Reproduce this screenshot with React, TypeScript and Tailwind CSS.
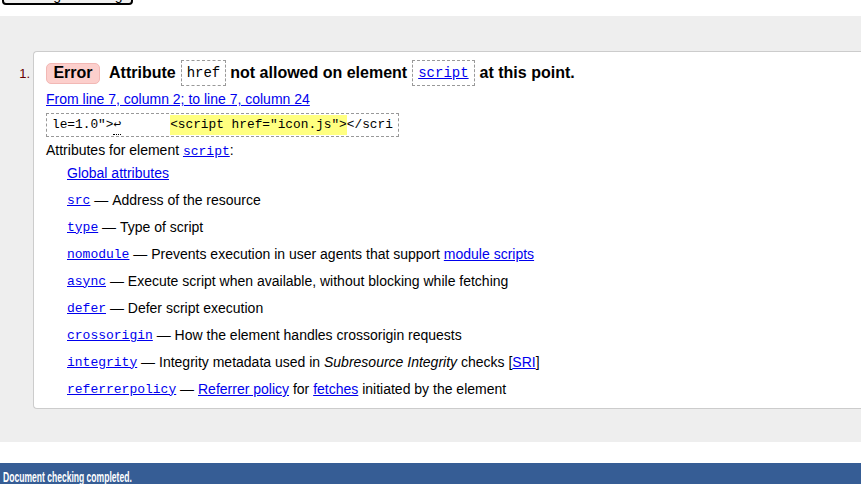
const attrs: { name: string; desc: React.ReactNode }[] = [
  { name: "src", desc: "Address of the resource" },
  { name: "type", desc: "Type of script" },
  {
    name: "nomodule",
    desc: (
      <>
        Prevents execution in user agents that support{" "}
        <a href="#" className="text-[#00e] underline">module scripts</a>
      </>
    ),
  },
  { name: "async", desc: "Execute script when available, without blocking while fetching" },
  { name: "defer", desc: "Defer script execution" },
  { name: "crossorigin", desc: "How the element handles crossorigin requests" },
  {
    name: "integrity",
    desc: (
      <>
        Integrity metadata used in <i>Subresource Integrity</i> checks [
        <a href="#" className="text-[#00e] underline">SRI</a>]
      </>
    ),
  },
  {
    name: "referrerpolicy",
    desc: (
      <>
        <a href="#" className="text-[#00e] underline">Referrer policy</a> for{" "}
        <a href="#" className="text-[#00e] underline">fetches</a> initiated by the element
      </>
    ),
  },
];

const mono = "font-['Liberation_Mono','DejaVu_Sans_Mono',monospace]";

export default function App() {
  return (
    <div className="h-[484px] overflow-hidden bg-white font-['Liberation_Sans',Arial,sans-serif] text-[14px] text-black">
      <div className="h-[16px] overflow-hidden">
        <button className="mt-[-14px] ml-[2px] block h-[19px] rounded-[4px] border-2 border-black bg-[#f0f0f0] px-[8px] text-[14px] leading-[15px] text-black">
          Message Filtering
        </button>
      </div>

      <div className="flex h-[426px] overflow-hidden bg-[#eeeeee] pt-[35px]">
        <div className="w-[33px] shrink-0 pr-[3px] pt-[14px] text-right text-[13px] leading-[18px] text-[#600]">
          1.
        </div>
        <div className="h-[358px] w-[900px] shrink-0 rounded-l-[4px] border border-r-0 border-[#cccccc] bg-white pl-[12px] pt-[8px]">
          <div className="flex h-[26px] items-center text-[16px] font-bold">
            <span className="flex h-[21px] w-[54px] items-center justify-center rounded-[5px] border border-[#f2b8b5] bg-[#fccfcc]">
              Error
            </span>
            <span className="ml-[9px]">Attribute</span>
            <code className={`${mono} ml-[5px] flex h-[26px] items-center border border-dashed border-[#999] px-[5px] text-[14px] font-normal`}>
              href
            </code>
            <span className="ml-[4px]">not allowed on element</span>
            <code className={`${mono} ml-[5px] flex h-[26px] items-center border border-dashed border-[#999] px-[5px] text-[14px] font-normal`}>
              <a href="#" className="text-[#00e] underline">script</a>
            </code>
            <span className="ml-[5px]">at this point.</span>
          </div>

          <div className="mt-[4px] leading-[18px]">
            <a href="#" className="text-[#00e] underline">
              From line 7, column 2; to line 7, column 24
            </a>
          </div>

          <div className={`${mono} mt-[5px] flex h-[24px] w-[353px] items-center overflow-hidden whitespace-pre border border-dashed border-[#999] pl-[5px] text-[12.8px]`}>
            <span>le=1.0"&gt;</span>
            <span className="border-b border-dotted border-black">↩</span>
            <span className="inline-block w-[49px] shrink-0" />
            <span className="bg-[#ffff80]">&lt;script href="icon.js"&gt;</span>
            <span>&lt;/scri</span>
          </div>

          <div className="mt-[5px] leading-[16px]">
            Attributes for element{" "}
            <a href="#" className={`${mono} text-[13px] text-[#00e] underline`}>script</a>:
          </div>

          <div className="pl-[21px]">
            <div className="flex h-[27px] items-center">
              <a href="#" className="text-[#00e] underline">Global attributes</a>
            </div>
            {attrs.map((a) => (
              <div key={a.name} className="flex h-[27px] items-center whitespace-pre">
                <a href="#" className={`${mono} text-[13px] text-[#00e] underline`}>{a.name}</a>
                <span> — </span>
                <span>{a.desc}</span>
              </div>
            ))}
          </div>
        </div>
      </div>

      <div className="mt-[21px] h-[30px] bg-[#365d95] pl-[3px] pt-[5px]">
        <div className="origin-left scale-x-[0.57] text-[15px] font-bold leading-[18px] text-white">
          Document checking completed.
        </div>
      </div>
    </div>
  );
}
